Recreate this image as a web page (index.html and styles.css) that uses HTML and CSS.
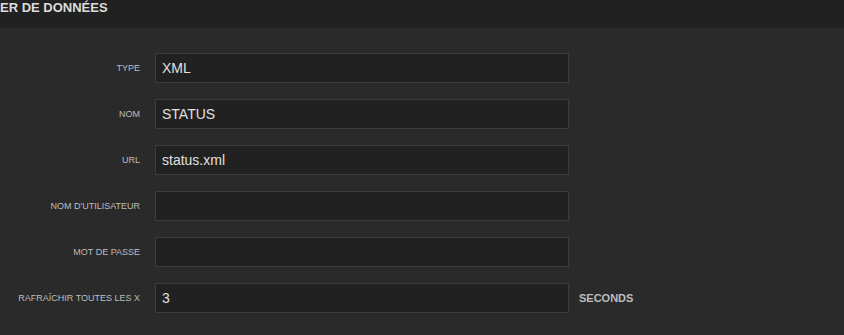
FILE: index.html
```html
<!DOCTYPE html>
<html lang="fr">
  <head>
    <meta charset="UTF-8" />
    <meta name="viewport" content="width=device-width, initial-scale=1.0" />
    <title>Source de données</title>
    <link rel="stylesheet" href="styles.css">
  </head>

  <body>
    <div class="panel-header">ER DE DONNÉES</div>

    <form class="source-form" id="sourceForm">
      <label for="type">Type</label>
      <input type="text" id="type" name="type" value="XML" />
      <span></span>

      <label for="name">Nom</label>
      <input type="text" id="name" name="name" value="STATUS" />
      <span></span>

      <label for="url">URL</label>
      <input type="text" id="url" name="url" value="status.xml" />
      <span></span>

      <label for="user">Nom d'utilisateur</label>
      <input type="text" id="user" name="user" />
      <span></span>

      <label for="password">Mot de passe</label>
      <input type="password" id="password" name="password" />
      <span></span>

      <label for="refresh">Rafraîchir toutes les X</label>
      <input type="text" id="refresh" name="refresh" value="3" />
      <span class="unit">Seconds</span>
    </form>
  </body>
</html>
```

FILE: styles.css
```css
body {
  font-family: "Liberation Sans", Arial, sans-serif;
  background-color: #2a2a2a;
  margin: 0;
  padding: 0;
}

.panel-header {
  height: 28px;
  line-height: 15px;
  background-color: #212121;
  color: #dcdcdc;
  font-size: 13px;
  font-weight: bold;
  white-space: nowrap;
  overflow: hidden;
}

/* Form grid */
.source-form {
  display: grid;
  grid-template-columns: 140px 414px auto;
  grid-auto-rows: 30px;
  column-gap: 15px;
  row-gap: 16px;
  padding-top: 25px;
}

.source-form label {
  align-self: center;
  text-align: right;
  text-transform: uppercase;
  font-size: 9px;
  color: #bdbdbd;
  white-space: nowrap;
}

.source-form input {
  box-sizing: border-box;
  width: 100%;
  height: 30px;
  margin: 0;
  padding: 0 6px;
  background-color: #212121;
  border: 1px solid #3c3c3c;
  border-radius: 0;
  color: #e0e0e0;
  font-family: "Liberation Sans", Arial, sans-serif;
  font-size: 14px;
  outline: none;
}

.unit {
  align-self: center;
  margin-left: -5px;
  text-transform: uppercase;
  font-size: 11px;
  font-weight: bold;
  color: #bdbdbd;
}
```
